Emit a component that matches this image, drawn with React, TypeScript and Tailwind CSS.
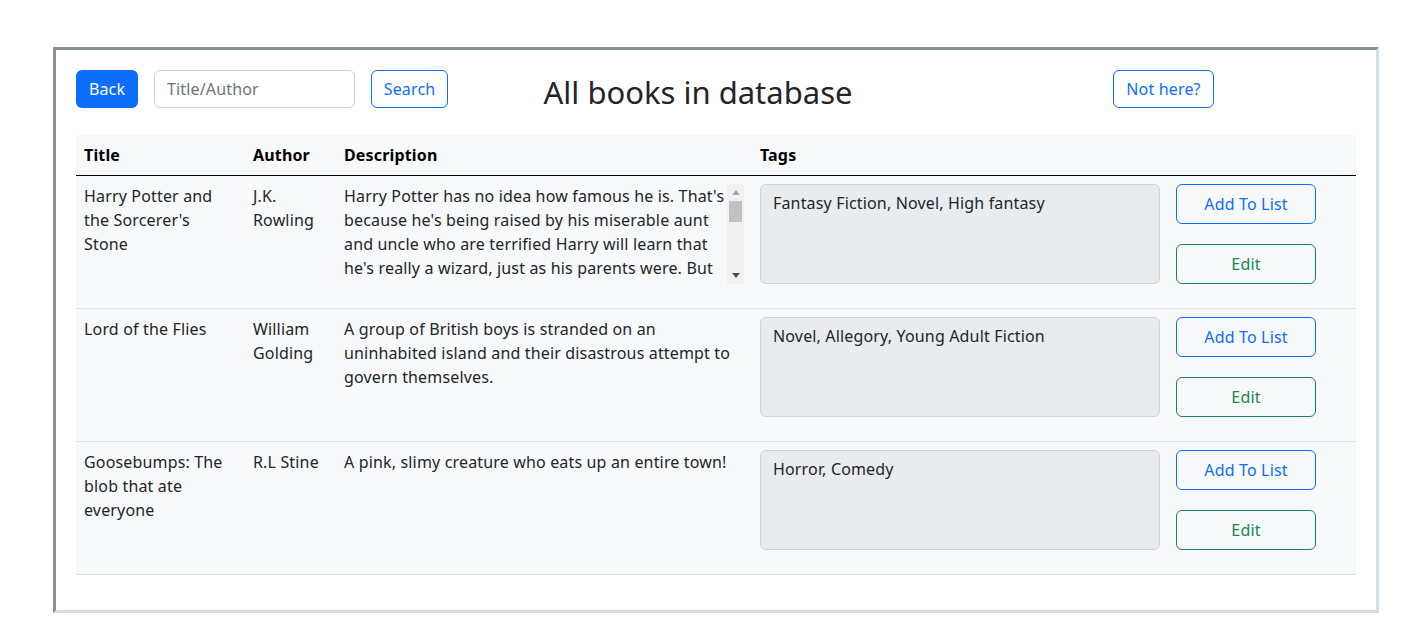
import React from "react";

type Book = {
    title: string;
    author: string;
    description: string;
    tags: string;
};

const BOOKS: Book[] = [
    {
        title: "Harry Potter and the Sorcerer's Stone",
        author: "J.K. Rowling",
        description:
            "Harry Potter has no idea how famous he is. That's because he's being raised by his miserable aunt and uncle who are terrified Harry will learn that he's really a wizard, just as his parents were. But everything changes when Harry is summoned to attend an infamous school for wizards, and he begins to discover some clues about his illustrious birthright.",
        tags: "Fantasy Fiction, Novel, High fantasy"
    },
    {
        title: "Lord of the Flies",
        author: "William Golding",
        description:
            "A group of British boys is stranded on an uninhabited island and their disastrous attempt to govern themselves.",
        tags: "Novel, Allegory, Young Adult Fiction"
    },
    {
        title: "Goosebumps: The blob that ate everyone",
        author: "R.L Stine",
        description: "A pink, slimy creature who eats up an entire town!",
        tags: "Horror, Comedy"
    }
];

// long descriptions scroll inside a 100px box
function Description({ text, scroll }: { text: string; scroll: boolean }) {
    if (!scroll) return <div className="h-[100px]">{text}</div>;
    return (
        <div className="flex h-[100px]">
            <div className="w-[383px] overflow-y-auto [scrollbar-width:none]">{text}</div>
            <div className="flex w-[17px] flex-col items-center bg-[#f1f1f1]">
                <div className="flex h-[17px] items-center justify-center">
                    <svg width="8" height="5" viewBox="0 0 8 5"><path d="M0 5 L4 0 L8 5 Z" fill="#a3a3a3" /></svg>
                </div>
                <div className="h-[21px] w-[13px] bg-[#c1c1c1]" />
                <div className="flex-1" />
                <div className="flex h-[17px] items-center justify-center">
                    <svg width="8" height="5" viewBox="0 0 8 5"><path d="M0 0 L8 0 L4 5 Z" fill="#505050" /></svg>
                </div>
            </div>
        </div>
    );
}

export default function App() {
    return (
        <div className="min-h-screen bg-white pt-[47px] pl-[53px] text-[16px] leading-6 tracking-[0.16px] text-[#212529] [font-family:'Noto_Sans',sans-serif]">
            <div className="w-[1326px] h-[566px] border-[3px] border-t-[#878e95] border-l-[#878e95] border-r-[#d3dde5] border-b-[#d3dde5] px-5 pt-5">
                {/* header row */}
                <div className="flex items-start h-[65px]">
                    <div className="flex items-center gap-4">
                        <button className="h-[38px] w-[62px] rounded-md bg-[#0d6efd] text-white">Back</button>
                        <input
                            placeholder="Title/Author"
                            className="h-[38px] w-[201px] px-3 rounded-md border border-[#ced4da] placeholder:text-[#6c757d] outline-none"
                        />
                        <button className="h-[38px] w-[77px] rounded-md border border-[#0d6efd] text-[#0d6efd]">Search</button>
                    </div>
                    <h2 className="w-[500px] text-center text-[31px] leading-[38px] tracking-normal font-normal mt-[3px]">All books in database</h2>
                    <button className="ml-[165px] h-[38px] w-[101px] rounded-md border border-[#0d6efd] text-[#0d6efd]">Not here?</button>
                </div>

                <table className="w-[1280px] table-fixed border-collapse">
                    <colgroup>
                        <col className="w-[169px]" />
                        <col className="w-[91px]" />
                        <col className="w-[416px]" />
                        <col className="w-[416px]" />
                        <col className="w-[188px]" />
                    </colgroup>
                    <thead className="bg-[#f8f9fa] text-black">
                        <tr className="border-b border-black">
                            <th className="text-left font-bold p-2">Title</th>
                            <th className="text-left font-bold p-2">Author</th>
                            <th className="text-left font-bold p-2">Description</th>
                            <th className="text-left font-bold p-2">Tags</th>
                            <th className="p-2"></th>
                        </tr>
                    </thead>
                    <tbody>
                        {BOOKS.map((b, i) => (
                            <tr key={b.title} className="bg-[#f8f9fa] border-b border-[#dee2e6] align-top">
                                <td className="px-2 pt-2 pb-6">{b.title}</td>
                                <td className="px-2 pt-2 pb-6">{b.author}</td>
                                <td className="px-2 pt-2 pb-6">
                                    <Description text={b.description} scroll={i === 0} />
                                </td>
                                <td className="px-2 pt-2 pb-6">
                                    <div className="h-[100px] rounded-md border border-[#ced4da] bg-[#e9ecef] px-3 py-1.5">{b.tags}</div>
                                </td>
                                <td className="px-2 pt-2 pb-6">
                                    <div className="flex flex-col gap-5">
                                        <button className="h-10 w-[140px] rounded-md border border-[#0d6efd] text-[#0d6efd]">Add To List</button>
                                        <button className="h-10 w-[140px] rounded-md border border-[#198754] text-[#198754]">Edit</button>
                                    </div>
                                </td>
                            </tr>
                        ))}
                    </tbody>
                </table>
            </div>
        </div>
    );
}
